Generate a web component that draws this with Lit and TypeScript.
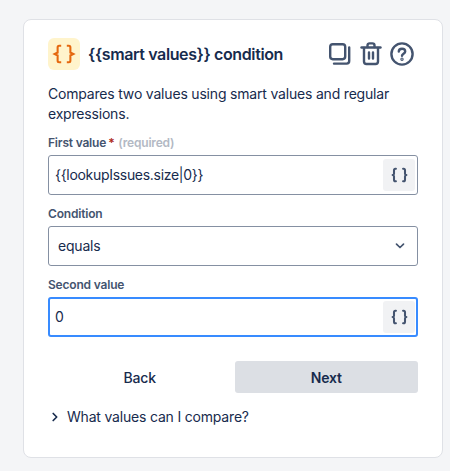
import { LitElement, html, css, svg } from "lit";
import { customElement } from "lit/decorators.js";

const wideBraces = svg`<path d="M7.5 3.6H6.4C5.9 3.6 5.6 3.9 5.6 4.4V7.2L4 8L5.6 8.8V11.6C5.6 12.1 5.9 12.4 6.4 12.4H7.5M10.5 3.6H11.6C12.1 3.6 12.4 3.9 12.4 4.4V7.2L14 8L12.4 8.8V11.6C12.4 12.1 12.1 12.4 11.6 12.4H10.5" fill="none" stroke="currentColor" stroke-linecap="butt" stroke-linejoin="miter"/>`;
const braces = svg`<path d="M6.4 3.5H6C5.3 3.5 5 3.9 5 4.6V7C5 7.7 4.7 8 4 8C4.7 8 5 8.3 5 9V11.4C5 12.1 5.3 12.5 6 12.5H6.4M11.6 3.5H12C12.7 3.5 13 3.9 13 4.6V7C13 7.7 13.3 8 14 8C13.3 8 13 8.3 13 9V11.4C13 12.1 12.7 12.5 12 12.5H11.6" fill="none" stroke="currentColor" stroke-linecap="round" stroke-linejoin="round"/>`;

@customElement("app-root")
export class AppRoot extends LitElement {
  static styles = css`
    :host {
      display: block;
      width: 450px;
      height: 471px;
      box-sizing: border-box;
      padding: 19px 7px 13px 23px;
      background: #f4f5f7;
      font-family: Inter, "Liberation Sans", sans-serif;
      font-size: 14px;
      letter-spacing: -0.19px;
      color: #172b4d;
      overflow: hidden;
    }
    .card {
      box-sizing: border-box;
      height: 439px;
      background: #fff;
      border: 1px solid #dfe1e6;
      border-radius: 8px;
      padding: 18px 24px 0 24px;
    }
    .header {
      display: flex;
      align-items: center;
      height: 32px;
    }
    .badge {
      width: 32px;
      height: 32px;
      border-radius: 6px;
      background: #fff4cc;
      color: #e56910;
      display: flex;
      align-items: center;
      justify-content: center;
      flex: none;
    }
    .badge svg {
      flex: none;
      stroke-width: 1.1;
    }
    .title {
      margin-left: 8px;
      font-size: 16px;
      font-weight: 600;
      line-height: 20px;
      letter-spacing: -0.38px;
      flex: 1;
      white-space: nowrap;
    }
    .actions {
      display: flex;
      align-items: center;
      gap: 4px;
      color: #44546f;
      margin-right: 2px;
    }
    .actions svg {
      display: block;
    }
    .desc {
      margin: 14px 0 0;
      line-height: 20px;
    }
    .field {
      margin-top: 11px;
    }
    .field + .field {
      margin-top: 11px;
    }
    .label {
      font-size: 12px;
      font-weight: 600;
      line-height: 16px;
      color: #44546f;
      margin-bottom: 4px;
      white-space: nowrap;
    }
    .req {
      color: #ae2a19;
      margin-left: 2px;
    }
    .hint {
      color: #b3b9c4;
      margin-left: 1px;
    }
    .input {
      box-sizing: border-box;
      height: 40px;
      border: 1px solid #8590a2;
      border-radius: 3px;
      display: flex;
      align-items: center;
      padding: 0 2px 0 6px;
      line-height: 20px;
    }
    .input.focus {
      border: 2px solid #388bff;
      padding: 0 1px 0 5px;
    }
    .val {
      flex: 1;
    }
    .mono {
      letter-spacing: -0.3px;
    }
    .brace-btn {
      width: 32px;
      height: 32px;
      background: #f1f2f4;
      border-radius: 3px;
      color: #44546f;
      display: flex;
      align-items: center;
      justify-content: center;
    }
    .brace-btn svg {
      flex: none;
      stroke-width: 1.5;
    }
    .select {
      padding: 0 12px 0 9px;
    }
    .select svg {
      display: block;
      color: #44546f;
    }
    .buttons {
      display: grid;
      grid-template-columns: 1fr 1fr;
      gap: 3px;
      margin-top: 24px;
    }
    .btn {
      height: 32px;
      display: flex;
      align-items: center;
      justify-content: center;
      border-radius: 3px;
      font-weight: 500;
    }
    .btn.next {
      background: #dcdfe4;
      font-weight: 600;
    }
    .expander {
      display: flex;
      align-items: center;
      margin-top: 14px;
      line-height: 20px;
    }
    .expander svg {
      display: block;
      margin-right: 7px;
      margin-left: 2px;
    }
  `;

  render() {
    return html`
      <div class="card">
        <div class="header">
          <div class="badge">
            <svg width="34" height="30" viewBox="0 0 18 16" aria-hidden="true">${wideBraces}</svg>
          </div>
          <div class="title">{{smart values}} condition</div>
          <div class="actions">
            <svg width="28" height="28" viewBox="0 0 28 28" fill="none" stroke="currentColor" stroke-width="2.4" stroke-linejoin="round" aria-hidden="true">
              <rect x="4.2" y="4.2" width="15" height="15" rx="2.6" />
              <path d="M23.2 7.5V21C23.2 22.6 22.2 23.6 20.6 23.6H8" stroke-linecap="round" />
            </svg>
            <svg width="26" height="28" viewBox="0 0 26 28" fill="none" stroke="currentColor" stroke-width="2.4" stroke-linecap="round" stroke-linejoin="round" aria-hidden="true">
              <path d="M3.5 7.5H22.5" />
              <path d="M9.5 7V5.5C9.5 4.2 10.4 3.4 11.6 3.4H14.4C15.6 3.4 16.5 4.2 16.5 5.5V7" />
              <path d="M6 8V21.5C6 23 7 24 8.5 24H17.5C19 24 20 23 20 21.5V8" />
              <path d="M11 12.5V18.5M15 12.5V18.5" />
            </svg>
            <svg width="28" height="28" viewBox="0 0 28 28" fill="none" stroke="currentColor" stroke-width="2.4" stroke-linecap="round" stroke-linejoin="round" aria-hidden="true">
              <circle cx="14" cy="14" r="10.6" />
              <path d="M10.8 11.6C10.8 9.9 12.2 8.8 14 8.8C15.8 8.8 17.2 9.9 17.2 11.4C17.2 13.6 14 13.8 14 15.8" />
              <circle cx="14" cy="19.2" r="0.5" fill="currentColor" />
            </svg>
          </div>
        </div>
        <p class="desc">Compares two values using smart values and regular expressions.</p>
        <div class="field">
          <div class="label">First value<span class="req">*</span> <span class="hint">(required)</span></div>
          <div class="input">
            <span class="val mono">{{lookupIssues.size|0}}</span>
            <div class="brace-btn"><svg width="25" height="22" viewBox="0 0 18 16" aria-hidden="true">${braces}</svg></div>
          </div>
        </div>
        <div class="field">
          <div class="label">Condition</div>
          <div class="input select">
            <span class="val">equals</span>
            <svg width="10" height="8" viewBox="0 0 10 8" fill="none" stroke="currentColor" stroke-width="1.7" stroke-linecap="round" stroke-linejoin="round" aria-hidden="true"><path d="M1.5 2.2L5 5.5L8.5 2.2" /></svg>
          </div>
        </div>
        <div class="field">
          <div class="label">Second value</div>
          <div class="input focus">
            <span class="val">0</span>
            <div class="brace-btn"><svg width="25" height="22" viewBox="0 0 18 16" aria-hidden="true">${braces}</svg></div>
          </div>
        </div>
        <div class="buttons">
          <div class="btn">Back</div>
          <div class="btn next">Next</div>
        </div>
        <div class="expander">
          <svg width="10" height="10" viewBox="0 0 10 10" fill="none" stroke="currentColor" stroke-width="1.7" stroke-linecap="round" stroke-linejoin="round" aria-hidden="true"><path d="M3.2 1.5L6.7 5L3.2 8.5" /></svg>
          What values can I compare?
        </div>
      </div>
    `;
  }
}
